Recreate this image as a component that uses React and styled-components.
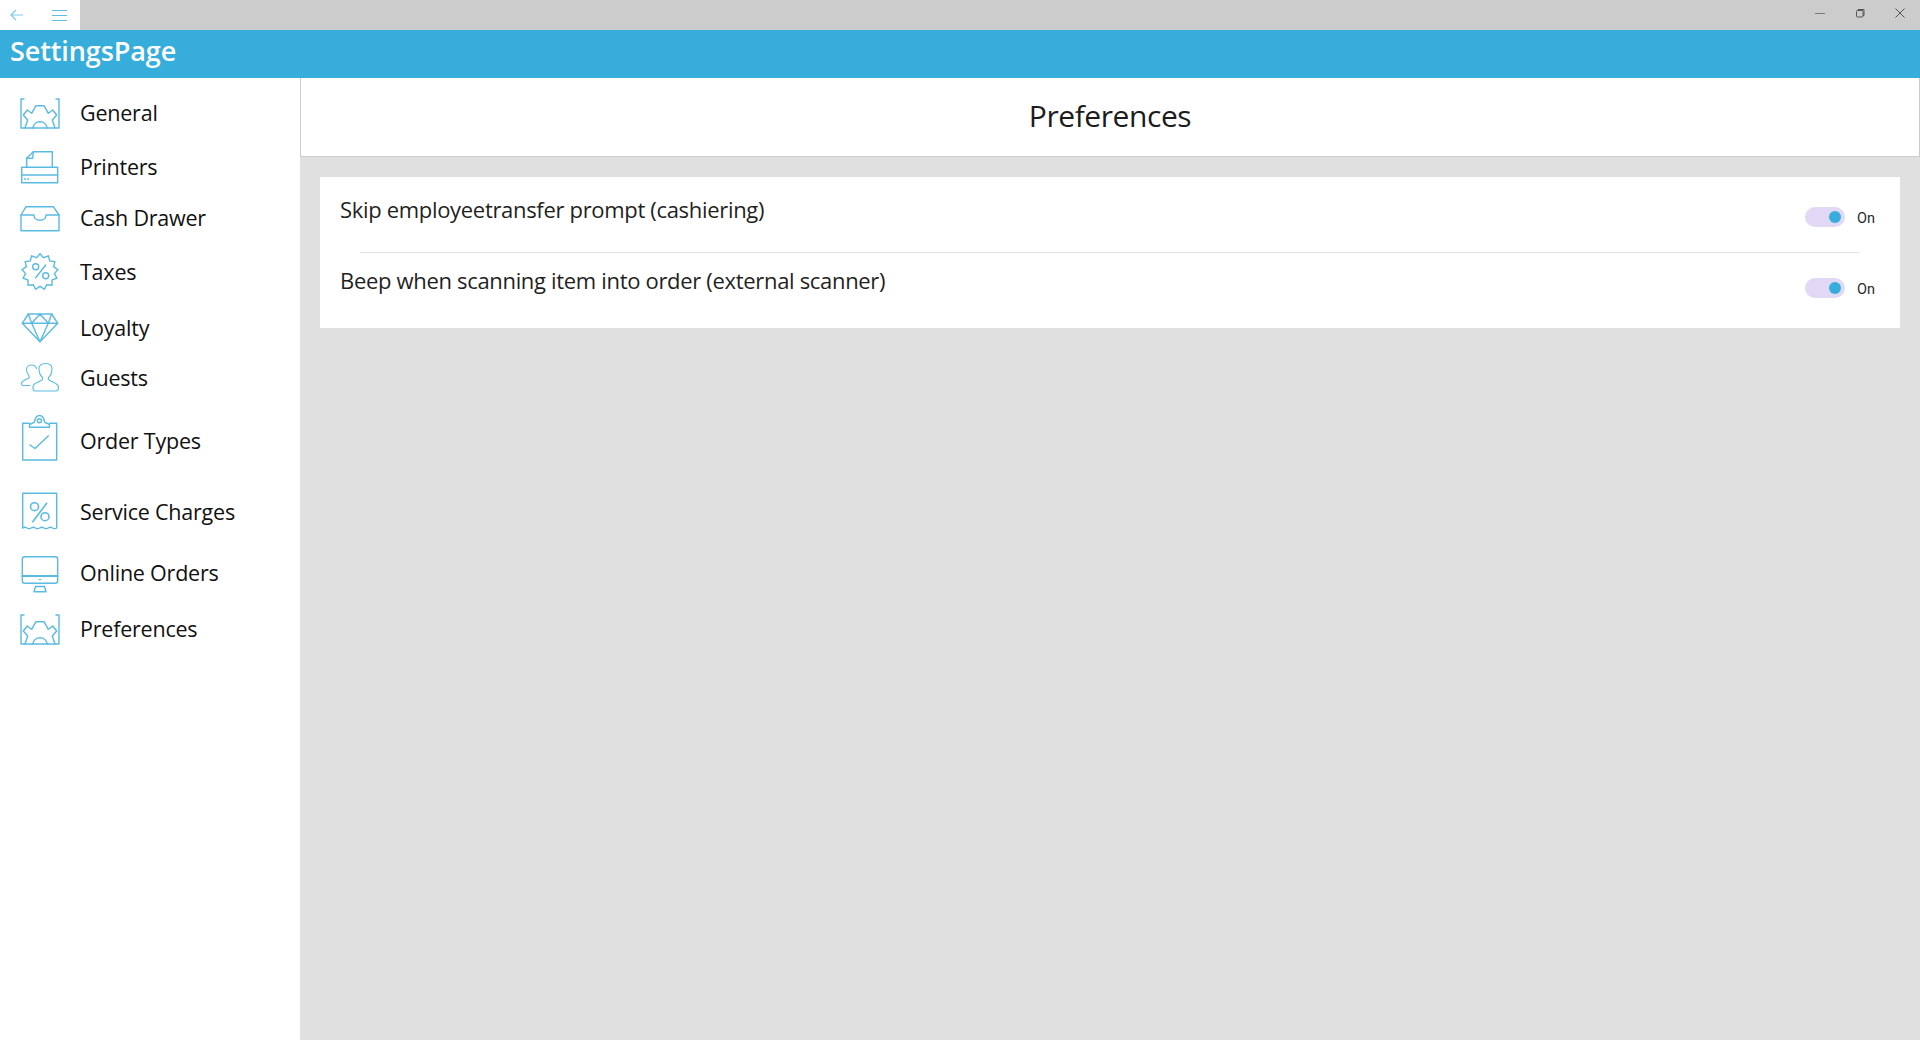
import React from "react";
import styled, { createGlobalStyle } from "styled-components";

const Global = createGlobalStyle`
  html, body { margin: 0; padding: 0; height: 100%; background: #e0e0e0; }
  body { font-family: "Open Sans", "Noto Sans", sans-serif; overflow: hidden; }
  #root { height: 100%; }
`;

const Page = styled.div`
  display: flex;
  flex-direction: column;
  width: 1920px;
  height: 1040px;
`;
const TitleBar = styled.div`
  display: flex;
  justify-content: space-between;
  height: 30px;
  background: #cccccc;
`;
const NavButtons = styled.div`
  display: flex;
  align-items: center;
  justify-content: space-between;
  width: 80px;
  padding: 0 13px 0 10px;
  box-sizing: border-box;
  background: #ffffff;
`;
const WindowButtons = styled.div`
  display: flex;
  align-items: center;
  gap: 30px;
  padding: 0 15px 5px 0;
`;
const Header = styled.div`
  display: flex;
  align-items: center;
  height: 48px;
  padding: 0 0 7px 10px;
  box-sizing: border-box;
  background: #36addb;
  color: #ffffff;
  font-size: 27px;
  font-weight: 600;
  letter-spacing: -0.1px;
`;
const Body = styled.div`
  display: flex;
  flex: 1;
  min-height: 0;
`;
const Sidebar = styled.nav`
  display: flex;
  flex-direction: column;
  width: 300px;
  padding-top: 8px;
  box-sizing: border-box;
  background: #ffffff;
`;
const NavRow = styled.div`
  display: flex;
  align-items: center;
  gap: 20px;
  height: ${(p) => p.$h}px;
  padding-left: 20px;
`;
const NavLabel = styled.span`
  padding-bottom: 2px;
  font-size: 21.5px;
  letter-spacing: -0.22px;
  color: #111111;
`;
const IconSvg = styled.svg`
  flex: none;
  overflow: visible;
  fill: none;
  stroke: #5abbe2;
  stroke-width: 1.4;
  stroke-linejoin: round;
  stroke-linecap: round;
`;
const Main = styled.main`
  flex: 1;
  display: flex;
  flex-direction: column;
`;
const TitlePanel = styled.div`
  display: flex;
  align-items: center;
  justify-content: center;
  height: 79px;
  padding-bottom: 3px;
  box-sizing: border-box;
  background: #ffffff;
  border: 1px solid #cccccc;
  border-top: none;
  font-size: 30px;
  letter-spacing: -0.42px;
  color: #1c1c1c;
`;
const Card = styled.section`
  display: flex;
  flex-direction: column;
  margin: 20px 20px 0 20px;
  background: #ffffff;
`;
const Row = styled.div`
  display: flex;
  justify-content: space-between;
  height: ${(p) => p.$h}px;
  padding: ${(p) => p.$top}px 25px 0 20px;
  box-sizing: border-box;
`;
const Label = styled.span`
  font-size: 22px;
  line-height: 32px;
  letter-spacing: -0.32px;
  color: #1f1f1f;
`;
const Divider = styled.div`
  height: 1px;
  margin: 0 40px;
  background: #e2e2e2;
`;
const ToggleWrap = styled.div`
  display: flex;
  align-items: center;
  gap: 12px;
  height: 20px;
  margin-top: ${(p) => p.$top}px;
  font-family: "Roboto", sans-serif;
  font-size: 14.5px;
  color: #2a2a2a;
`;
const OnText = styled.span`
  padding-top: 2px;
`;
const Track = styled.div`
  display: flex;
  align-items: center;
  justify-content: flex-end;
  width: 40px;
  height: 20px;
  padding-right: 4px;
  box-sizing: border-box;
  border-radius: 10px;
  background: #e0d8f5;
`;
const Knob = styled.div`
  width: 12px;
  height: 12px;
  border-radius: 50%;
  background: #36addb;
`;

const Icon = ({ children }) => (
  <IconSvg width="40" height="56" viewBox="0 -4 40 56">
    {children}
  </IconSvg>
);

const star = (() => {
  const pts = [];
  const n = 13;
  for (let i = 0; i < n * 2; i++) {
    const r = i % 2 ? 14.6 : 18;
    const a = (Math.PI * i) / n - Math.PI / 2;
    pts.push(`${(20 + r * Math.cos(a)).toFixed(2)},${(23.8 + r * Math.sin(a)).toFixed(2)}`);
  }
  return pts.join(" ");
})();

const GearIcon = () => (
  <Icon>
    <path d="M4 10H1V39H39V10H36" />
    <path d="M5 39L7.7 31L3.3 26L7.3 21L11.7 24.3L16 16.7H24L28.3 24.3L32.7 21L36.7 26L32.3 31L35 39" />
    <path d="M12.7 39A7.4 7.4 0 0 1 27.3 39" />
  </Icon>
);
const PrinterIcon = () => (
  <Icon>
    <path d="M6.7 24.3V15.3L13.3 8.7H32.3V24.3" />
    <path d="M6.7 15.3H12.7L13.3 8.7" />
    <rect x="1.7" y="24.3" width="36" height="15.4" />
    <path d="M1.7 32H37.7" />
    <path d="M4.6 36H5.6M7.8 36H8.8" />
  </Icon>
);
const DrawerIcon = () => (
  <Icon>
    <path d="M1 21L6 12.7H33.3L39 21V36.7H1Z" />
    <path d="M1 21H14C14 28 26 28 26 21H39" />
  </Icon>
);
const TaxIcon = () => (
  <Icon>
    <polygon points={star} strokeLinejoin="miter" />
    <circle cx="15.7" cy="18.7" r="3" />
    <circle cx="25.7" cy="27.7" r="3" />
    <path d="M25.7 17L15.7 29.7" />
  </Icon>
);
const DiamondIcon = () => (
  <Icon>
    <path d="M8.3 10H31.7L37.7 19.3L20 37.7L2.3 19.3Z" />
    <path d="M2.3 19.3H37.7" />
    <path d="M8.3 10L11.7 19.3L20 10L28.3 19.3L31.7 10" />
    <path d="M11.7 19.3L20 37.7L28.3 19.3" />
  </Icon>
);
const GuestsIcon = () => (
  <Icon>
    <path d="M15 37C13 37 13 35 13 33C13 29 19 28 22 26C23 25 23 24 22 23C20 21 19 18 19 15C19 11 22 9.5 25.5 9.5C29 9.5 32 11 32 15C32 18 31 21 29 23C28 24 28 25 29 26C32 28 38.5 29 38.5 33C38.5 35 38.5 37 36 37Z" strokeWidth="1.1" />
    <path d="M10 31.5H4C2 31.5 1 30.5 1.5 29C2.5 26 7 25.5 9 24C9.5 23 9.5 22 8.5 21C7 19 6.5 17 6.5 15.5C6.5 12.5 9 11 11.5 11C14 11 16 12.5 16.5 14.5" strokeWidth="1.1" />
  </Icon>
);
const ClipboardIcon = () => (
  <Icon>
    <path d="M9.5 6.3H2.7V43H36.7V6.3H29.5" />
    <path d="M9.5 10.3H29.5V8C28 6 25 6 24.5 5C24 1.5 22 -1.5 19.5 -1.5C17 -1.5 15 1.5 14.5 5C14 6 11 6 9.5 8Z" />
    <circle cx="19.4" cy="3.7" r="2" />
    <path d="M10 28L15 31.5L28.3 19" />
  </Icon>
);
const ReceiptIcon = () => (
  <Icon>
    <path d="M2.7 40V5.3H36.7V40q-2.1 1.4 -4.25 0t-4.25 0t-4.25 0t-4.25 0t-4.25 0t-4.25 0t-4.25 0t-4.25 0" />
    <circle cx="14.5" cy="18.7" r="4" strokeWidth="1.6" />
    <circle cx="25" cy="28.7" r="4" strokeWidth="1.6" />
    <path d="M26.7 15.3L12.7 33.7" strokeWidth="1.6" />
  </Icon>
);
const MonitorIcon = () => (
  <Icon>
    <rect x="2.3" y="7.7" width="35.4" height="26.6" rx="2.5" />
    <path d="M2.3 27H37.7" strokeWidth="1.8" />
    <path d="M19.5 30.6H20.5" />
    <path d="M15.5 37.5L14 42.7H26L24.5 37.5Z" />
  </Icon>
);

const items = [
  ["General", 54, GearIcon],
  ["Printers", 54, PrinterIcon],
  ["Cash Drawer", 48, DrawerIcon],
  ["Taxes", 60, TaxIcon],
  ["Loyalty", 52, DiamondIcon],
  ["Guests", 48, GuestsIcon],
  ["Order Types", 78, ClipboardIcon],
  ["Service Charges", 64, ReceiptIcon],
  ["Online Orders", 58, MonitorIcon],
  ["Preferences", 54, GearIcon],
];

const Toggle = ({ top }) => (
  <ToggleWrap $top={top}>
    <Track>
      <Knob />
    </Track>
    <OnText>On</OnText>
  </ToggleWrap>
);

export default function App() {
  return (
    <Page>
      <Global />
      <TitleBar>
        <NavButtons>
          <svg width="14" height="12" viewBox="0 0 14 12" fill="none" stroke="#7ccbea" strokeWidth="1.2">
            <path d="M13 6H1M6 1L1 6L6 11" />
          </svg>
          <svg width="15" height="11" viewBox="0 0 15 11" fill="none" stroke="#5dbde3" strokeWidth="1">
            <path d="M0 .5H15M0 5.5H15M0 10.5H15" />
          </svg>
        </NavButtons>
        <WindowButtons>
          <svg width="10" height="10" viewBox="0 0 10 10" fill="none" stroke="#777" strokeWidth="1">
            <path d="M0 5.5H10" />
          </svg>
          <svg width="10" height="10" viewBox="0 0 10 10" fill="none" stroke="#555" strokeWidth="1">
            <rect x="1.5" y="2.5" width="6.5" height="6.5" rx="1" />
            <path d="M3 2.5V1.5H9V7.5H8" />
          </svg>
          <svg width="10" height="10" viewBox="0 0 10 10" fill="none" stroke="#555" strokeWidth="1">
            <path d="M.5 .5L9.5 9.5M9.5 .5L.5 9.5" />
          </svg>
        </WindowButtons>
      </TitleBar>
      <Header>SettingsPage</Header>
      <Body>
        <Sidebar>
          {items.map(([label, h, Ic]) => (
            <NavRow key={label} $h={h}>
              <Ic />
              <NavLabel>{label}</NavLabel>
            </NavRow>
          ))}
        </Sidebar>
        <Main>
          <TitlePanel>Preferences</TitlePanel>
          <Card>
            <Row $h={75} $top={16}>
              <Label>Skip employeetransfer prompt (cashiering)</Label>
              <Toggle top={14} />
            </Row>
            <Divider />
            <Row $h={75} $top={11}>
              <Label>Beep when scanning item into order (external scanner)</Label>
              <Toggle top={14} />
            </Row>
          </Card>
        </Main>
      </Body>
    </Page>
  );
}
